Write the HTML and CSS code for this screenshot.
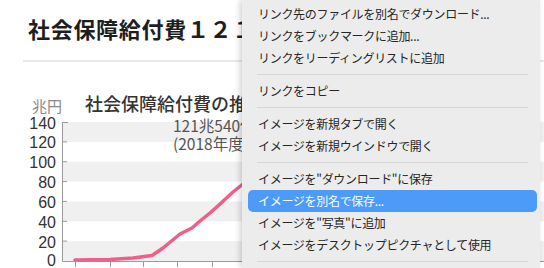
FILE: index.html
```html
<!DOCTYPE html>
<html lang="ja">
<head>
    <meta charset="UTF-8">
    <meta name="viewport" content="width=device-width, initial-scale=1.0">
    <title>社会保障給付費</title>
    <link rel="stylesheet" href="styles.css">
</head>
<body>
    <div class="page">
        <h1 class="title">社会保障給付費１２１兆円　過去最高を更新</h1>
        <hr class="rule">

        <div class="chart-head">
            <span class="unit">兆円</span>
            <h2 class="chart-title">社会保障給付費の推移</h2>
        </div>

        <svg class="chart" width="521" height="150" viewBox="0 0 521 150">
            <!-- 縞模様 -->
            <rect class="band" x="40" y="5" width="481" height="19.86"/>
            <rect class="band" x="40" y="44.71" width="481" height="19.86"/>
            <rect class="band" x="40" y="84.43" width="481" height="19.86"/>
            <rect class="band" x="40" y="124.14" width="481" height="19.86"/>

            <!-- 軸 -->
            <path class="axis" d="M39.5 5 V144.5 H521"/>
            <path class="axis" d="M39.5 5.5 H45 M39.5 24.9 H44 M39.5 44.7 H44 M39.5 64.6 H44 M39.5 84.4 H44 M39.5 104.3 H44 M39.5 124.1 H44"/>
            <path class="axis" d="M52.5 144 V150 M87.5 144 V150 M120.5 144 V150 M154.5 144 V150 M189.5 144 V150 M223.5 144 V150"/>

            <g class="y-label">
                <text x="33" y="12">140</text>
                <text x="33" y="31.4">120</text>
                <text x="33" y="51.2">100</text>
                <text x="33" y="71.1">80</text>
                <text x="33" y="90.9">60</text>
                <text x="33" y="110.8">40</text>
                <text x="33" y="130.6">20</text>
                <text x="33" y="149">0</text>
            </g>

            <polyline class="trend" points="52,143 87,142.5 110,141 129,138.5 140,131 157,117 169,111 177,104 187,96 197,87 210,75 220,67 232,58 247,42 262,30"/>

            <g class="note">
                <text x="150" y="15">121兆540億円</text>
                <text x="150" y="33">(2018年度)</text>
            </g>
        </svg>
    </div>

    <div class="context-menu">
        <div class="menu-item">リンク先のファイルを別名でダウンロード...</div>
        <div class="menu-item">リンクをブックマークに追加...</div>
        <div class="menu-item">リンクをリーディングリストに追加</div>
        <div class="menu-sep"></div>
        <div class="menu-item">リンクをコピー</div>
        <div class="menu-sep"></div>
        <div class="menu-item">イメージを新規タブで開く</div>
        <div class="menu-item">イメージを新規ウインドウで開く</div>
        <div class="menu-sep"></div>
        <div class="menu-item">イメージを"ダウンロード"に保存</div>
        <div class="menu-item is-active">イメージを別名で保存...</div>
        <div class="menu-item">イメージを"写真"に追加</div>
        <div class="menu-item">イメージをデスクトップピクチャとして使用</div>
        <div class="menu-sep"></div>
    </div>
</body>
</html>
```

FILE: styles.css
```css
body {
    margin: 0;
    height: 268px;
    overflow: hidden;
    background: #fff;
    color: #222;
    font-family: "Noto Sans CJK JP", "Liberation Sans", sans-serif;
}
.page {
    padding: 13px 0 0 23px;
}
.title {
    margin: 0 0 0 5px;
    font-size: 22px;
    line-height: 30px;
    font-weight: 700;
    letter-spacing: 0.7px;
    white-space: nowrap;
    color: #1e1e1e;
}
.rule {
    margin: 17px 0 0;
    height: 0;
    border: 0;
    border-top: 2px solid #e8e8e8;
}
.chart-head {
    display: flex;
    align-items: center;
    margin-top: 30px;
    height: 22px;
}
.unit {
    width: 30px;
    margin-left: 9px;
    padding-top: 5px;
    font-size: 15px;
    color: #8a8a8a;
}
.chart-title {
    margin: 0 0 0 23px;
    font-size: 18px;
    line-height: 22px;
    font-weight: 500;
    white-space: nowrap;
    color: #333;
}
.chart {
    display: block;
    margin-top: 3px;
}
.band {
    fill: #f0f0f0;
}
.axis {
    fill: none;
    stroke: #9a9a9a;
    stroke-width: 1;
}
.y-label text {
    font-family: "Liberation Sans", sans-serif;
    font-size: 16px;
    fill: #333;
    text-anchor: end;
}
.trend {
    fill: none;
    stroke: #ef5f88;
    stroke-width: 3.5;
    stroke-linejoin: round;
    stroke-linecap: round;
}
.note text {
    font-size: 15.5px;
    fill: #555;
}

/* コンテキストメニュー */
.context-menu {
    position: absolute;
    top: 0;
    left: 242px;
    width: 298px;
    height: 268px;
    padding-top: 3px;
    box-sizing: border-box;
    background: #ececec;
    box-shadow: -2px 0 6px rgba(0,0,0,0.18);
}
.menu-item {
    height: 22px;
    line-height: 22px;
    padding-left: 16px;
    font-size: 12px;
    letter-spacing: -0.3px;
    color: #262626;
    white-space: nowrap;
}
.menu-item.is-active {
    margin: 0 3px 0 6px;
    padding-left: 10px;
    border-radius: 5px;
    background: #4d9bf8;
    color: #fff;
}
.menu-sep {
    height: 11px;
    padding-top: 5px;
    box-sizing: border-box;
}
.menu-sep::before {
    content: "";
    display: block;
    margin: 0 12px 0 15px;
    border-top: 1px solid #d6d6d6;
}
```
